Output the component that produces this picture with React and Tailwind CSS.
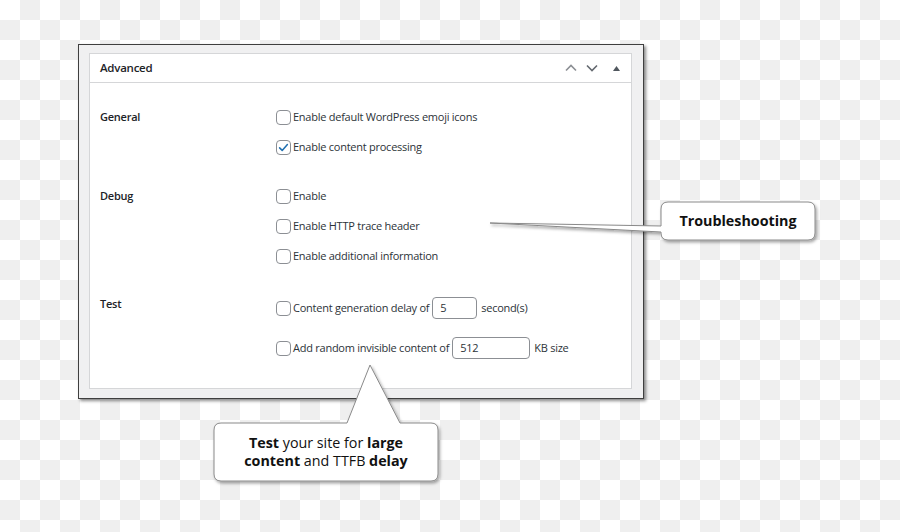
import React from 'react';

const Checkbox = ({ checked }) => (
  <span className="w-[15px] h-[15px] shrink-0 rounded-[4px] border border-[#8c8f94] bg-white flex items-center justify-center">
    {checked && (
      <svg width="13" height="13" viewBox="0 0 20 20">
        <path d="M4 10.5l4 4 8-9" fill="none" stroke="#2271b1" strokeWidth="2.4" strokeLinecap="round" strokeLinejoin="round" />
      </svg>
    )}
  </span>
);

const Row = ({ checked, children }) => (
  <div className="h-[30px] flex items-center gap-[2px]">
    <Checkbox checked={checked} />
    {children}
  </div>
);

const Section = ({ title, className = '', labelClass = 'leading-[30px]', children }) => (
  <div className={`flex ${className}`}>
    <div className={`w-[176px] shrink-0 font-semibold text-[#1d2327] ${labelClass}`}>{title}</div>
    <div className="flex flex-col">{children}</div>
  </div>
);

const TextInput = ({ value, width }) => (
  <span className={`${width} h-[22px] ml-[1px] mr-[2px] rounded-[4px] border border-[#8c8f94] bg-white px-[7px] flex items-center text-[#2c3338]`}>
    {value}
  </span>
);

export default function App() {
  return (
    <div
      className="relative w-[900px] h-[532px] overflow-hidden pl-[78px] pt-[44px] bg-[conic-gradient(#efefef_25%,#ffffff_0_50%,#efefef_0_75%,#ffffff_0)] bg-[length:40px_40px]"
      style={{ fontFamily: '"Open Sans", "Noto Sans", sans-serif' }}
    >
      {/* frame */}
      <div className="w-[566px] h-[355px] bg-[#f0f0f1] border border-[#3f3f3f] shadow-[2px_2px_3px_rgba(0,0,0,0.45)] pt-[8px] pl-[10px] pr-[11px] pb-[9px]">
        <div className="h-full bg-white border border-[#d5d6d8] text-[11px] tracking-[-0.25px] text-[#2c3338]">
          <div className="h-[29px] border-b border-[#d5d6d8] flex items-center pl-[10px] pr-[10px]">
            <span className="text-[11.5px] font-semibold text-[#1d2327]">Advanced</span>
            <div className="ml-auto flex items-center">
              <svg width="12" height="8" viewBox="0 0 12 8" className="mr-[9px]">
                <path d="M1 6.5L6 1.5l5 5" fill="none" stroke="#8c8f94" strokeWidth="1.6" />
              </svg>
              <svg width="12" height="8" viewBox="0 0 12 8" className="mr-[15px]">
                <path d="M1 1.5l5 5 5-5" fill="none" stroke="#646970" strokeWidth="1.6" />
              </svg>
              <svg width="7" height="5" viewBox="0 0 7 5" className="mr-[1px]">
                <path d="M0 5L3.5 0L7 5Z" fill="#50575e" />
              </svg>
            </div>
          </div>

          <div className="pt-[19px] px-[10px]">
            <Section title="General">
              <Row>Enable default WordPress emoji icons</Row>
              <Row checked>Enable content processing</Row>
            </Section>

            <Section title="Debug" className="mt-[19px]">
              <Row>Enable</Row>
              <Row>Enable HTTP trace header</Row>
              <Row>Enable additional information</Row>
            </Section>

            <Section title="Test" className="mt-[22px]" labelClass="leading-[22px]">
              <Row>
                Content generation delay of
                <TextInput value="5" width="w-[45px]" />
                second(s)
              </Row>
              <div className="h-[30px] mt-[10px] flex items-center gap-[2px]">
                <Checkbox />
                Add random invisible content of
                <TextInput value="512" width="w-[78px]" />
                KB size
              </div>
            </Section>
          </div>
        </div>
      </div>

      {/* callout shapes */}
      <svg className="absolute inset-0 pointer-events-none" width="900" height="532" viewBox="0 0 900 532">
        <defs>
          <filter id="sh" x="-10%" y="-10%" width="130%" height="140%">
            <feDropShadow dx="1.5" dy="2" stdDeviation="1.6" floodColor="#000" floodOpacity="0.35" />
          </filter>
        </defs>
        <path
          d="M668 202 H808 Q815 202 815 209 V233 Q815 240 808 240 H668 Q661 240 661 233 V232 L490 223 L661 226 V209 Q661 202 668 202 Z"
          fill="#fff"
          stroke="#8a8a8a"
          strokeWidth="1"
          filter="url(#sh)"
        />
        <path
          d="M221 423 H347 L370 365 L400 423 H431 Q438 423 438 430 V474 Q438 481 431 481 H221 Q214 481 214 474 V430 Q214 423 221 423 Z"
          fill="#fff"
          stroke="#8a8a8a"
          strokeWidth="1"
          filter="url(#sh)"
        />
      </svg>

      {/* callout texts */}
      <div className="absolute left-[661px] top-[202px] w-[154px] h-[38px] flex items-center justify-center text-[14.3px] font-bold text-[#111]">
        Troubleshooting
      </div>
      <div className="absolute left-[214px] top-[423px] w-[224px] h-[58px] flex flex-col items-center justify-center text-[14.3px] leading-[18px] text-[#111]">
        <span>
          <b>Test</b> your site for <b>large</b>
        </span>
        <span>
          <b>content</b> and TTFB <b>delay</b>
        </span>
      </div>
    </div>
  );
}
